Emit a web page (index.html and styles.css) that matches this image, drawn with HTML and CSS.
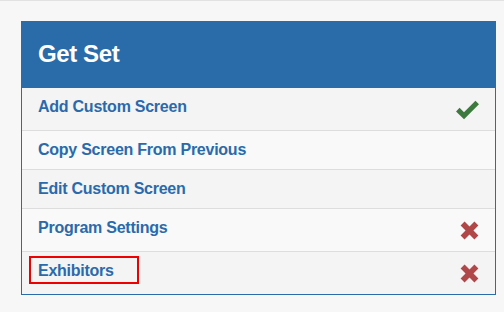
FILE: index.html
```html
<!DOCTYPE html>
<html>
<head>
<meta charset="utf-8">
<link rel="stylesheet" href="styles.css">
</head>
<body>
<div class="topline"></div>
<div class="panel">
  <div class="panel-heading">Get Set</div>
  <div class="list">
    <div class="item odd">
      <a class="label">Add Custom Screen</a>
      <svg class="icon check" viewBox="0 0 25 19" width="25" height="19"><polyline points="2.8,9.6 9,15.7 22.2,2.5" fill="none" stroke="#3c7a3e" stroke-width="5" stroke-linejoin="miter"/></svg>
    </div>
    <div class="item even">
      <a class="label">Copy Screen From Previous</a>
    </div>
    <div class="item odd">
      <a class="label">Edit Custom Screen</a>
    </div>
    <div class="item even">
      <a class="label">Program Settings</a>
      <svg class="icon cross" viewBox="0 0 19 19" width="19" height="19"><path d="M2.6 2.6L16.4 16.4M16.4 2.6L2.6 16.4" stroke="#b0484a" stroke-width="5.6"/></svg>
    </div>
    <div class="item odd highlighted">
      <a class="label">Exhibitors</a>
      <svg class="icon cross" viewBox="0 0 19 19" width="19" height="19"><path d="M2.6 2.6L16.4 16.4M16.4 2.6L2.6 16.4" stroke="#b0484a" stroke-width="5.6"/></svg>
      <span class="annot"></span>
    </div>
  </div>
</div>
</body>
</html>
```
FILE: styles.css
```css
html, body {
  margin: 0;
  padding: 0;
  background: #f7f7f7;
  font-family: "Liberation Sans", Arial, sans-serif;
}
.topline {
  height: 1px;
  background: #e2e2e2;
}
.panel {
  margin: 20px 0 0 21px;
  width: 473px;
  border: 1px solid #2a6ca9;
  border-top: 0;
  background: #f7f7f7;
}
.panel-heading {
  background: #2a6ca9;
  color: #fff;
  font-weight: bold;
  font-size: 24px;
  line-height: 26px;
  letter-spacing: -0.4px;
  padding: 20px 16px 21px 16px;
  margin: 0 -1px;
  padding-left: 17px;
}
.item {
  position: relative;
  display: flex;
  align-items: center;
  justify-content: space-between;
  min-height: 18px;
  padding: 10px 16px;
  border-top: 1px solid #dddddd;
}
.item:first-child {
  border-top: 0;
}
.odd { background: #f4f4f4; }
.even { background: #f9f9f9; }
.label {
  color: #2a6aab;
  font-weight: bold;
  font-size: 16px;
  line-height: 18px;
  letter-spacing: -0.25px;
  align-self: flex-start;
}
.icon {
  display: block;
  overflow: visible;
  margin: 1.5px 0;
}
.check {
  margin-right: -1px;
}
.annot {
  position: absolute;
  left: 7px;
  top: 4px;
  width: 106px;
  height: 24px;
  border: 2px solid #ee0000;
}
```
